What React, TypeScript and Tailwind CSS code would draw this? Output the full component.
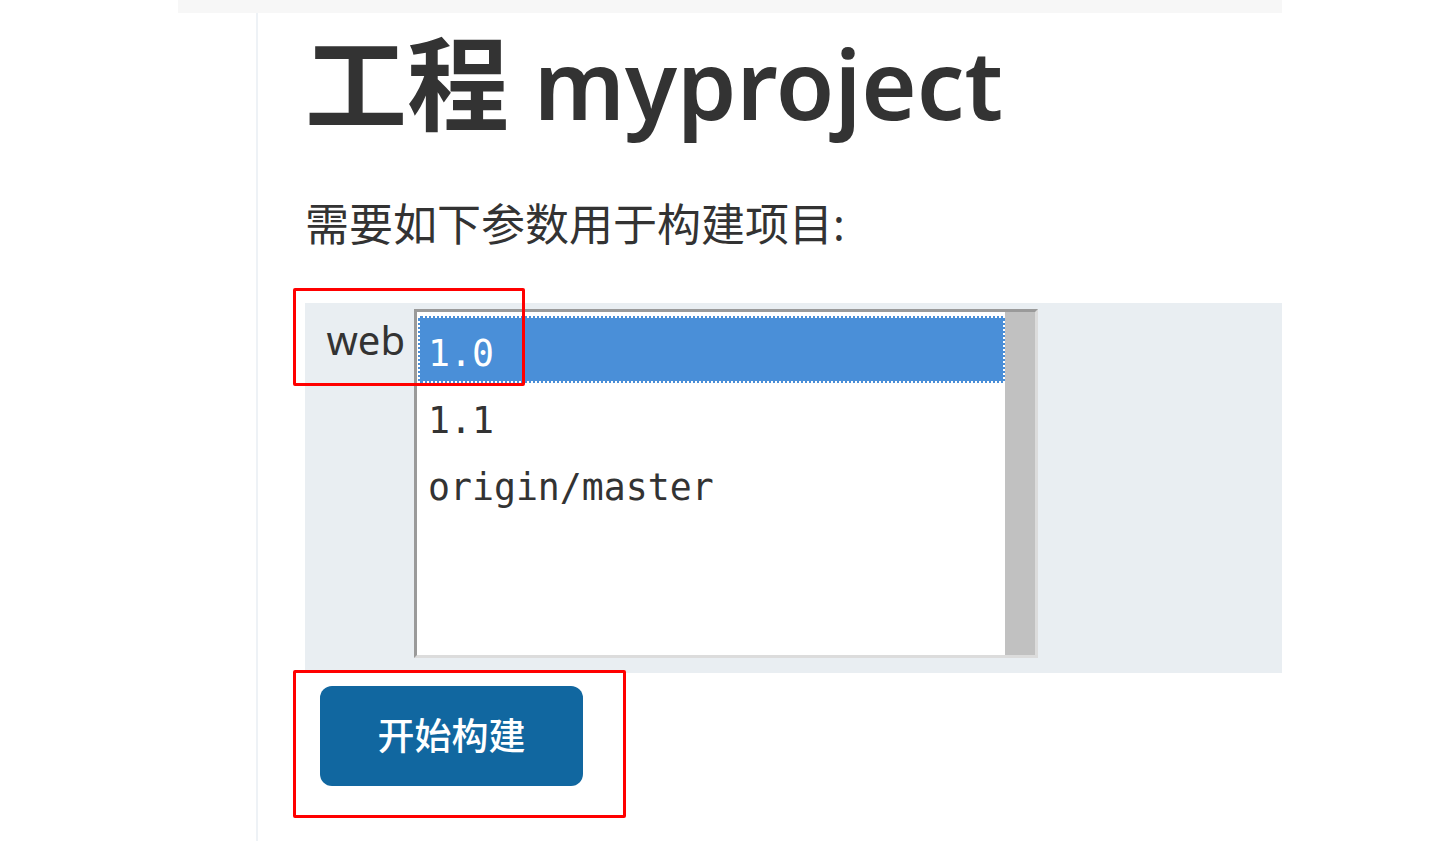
import React from "react";

const sans = { fontFamily: '"Noto Sans", "Noto Sans CJK SC", sans-serif' };

function ListBox() {
  const options = ["1.0", "1.1", "origin/master"];
  return (
    <div className="flex w-[624px] h-[349px] mt-[6px] border-t-[3px] border-l-[3px] border-t-[#9a9a9a] border-l-[#9a9a9a] border-r-[3px] border-b-[3px] border-r-[#dcdcdc] border-b-[#dcdcdc] bg-white">
      <div className="flex-1 pt-[4px] pl-[1px]">
        {options.map((o, i) => (
          <div
            key={o}
            className={
              "h-[67px] pl-[10px] pt-[9px] flex items-center text-[36.5px] " +
              (i === 0
                ? "bg-[#4a8fd8] text-white outline-2 outline-dotted outline-white -outline-offset-2"
                : "text-[#333]")
            }
            style={{ fontFamily: '"DejaVu Sans Mono", monospace' }}
          >
            {o}
          </div>
        ))}
      </div>
      <div className="w-[30px] bg-[#c1c1c1]" />
    </div>
  );
}

export default function App() {
  return (
    <div className="min-h-[841px] bg-white text-[#333]" style={sans}>
      <div className="ml-[178px] w-[1104px]">
        <div className="h-[13px] bg-[#f7f7f7]" />
        <div className="flex min-h-[828px]">
          <div className="w-[80px] border-r-2 border-[#eef2f6]" />
          <div className="flex-1 pl-[47px] relative">
            <h1 className="mt-[14px] h-[112px] text-[95px] leading-[112px] font-semibold whitespace-nowrap">
              <span className="relative top-[3px] text-[102px] leading-none">工程</span>{" "}myproject
            </h1>
            <p className="mt-[55px] text-[44px] leading-[60px]">需要如下参数用于构建项目:</p>
            <div className="mt-[49px] h-[370px] bg-[#e9eef2] flex">
              <div className="w-[109px] pr-[9px] pt-[10px] text-right text-[40px] leading-[54px]">web</div>
              <ListBox />
            </div>
            <button className="mt-[13px] ml-[15px] w-[263px] h-[100px] rounded-[12px] bg-[#1167a0] text-white text-[37px] font-medium">
              开始构建
            </button>

            {/* annotation boxes */}
            <div className="absolute left-[35px] top-[275px] w-[232px] h-[98px] border-[3px] border-[#f00] rounded-[2px] pointer-events-none" />
            <div className="absolute left-[35px] top-[657px] w-[333px] h-[148px] border-[3px] border-[#f00] rounded-[2px] pointer-events-none" />
          </div>
        </div>
      </div>
    </div>
  );
}
